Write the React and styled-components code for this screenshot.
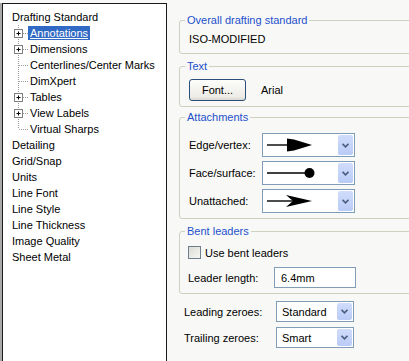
import React from 'react';
import styled, { createGlobalStyle } from 'styled-components';

const Global = createGlobalStyle`
  body {
    margin: 0;
    background: #f8f8f6;
    font-family: "Liberation Sans", Arial, sans-serif;
    font-size: 11px;
    color: #000;
  }
`;

const Page = styled.div`
  display: flex;
  width: 409px;
  height: 361px;
  overflow: hidden;
  padding-top: 3px;
  box-sizing: border-box;
  background: #f8f8f6;
`;

const TreePane = styled.div`
  width: 167px;
  flex: none;
  height: 380px;
  box-sizing: border-box;
  border-left: 2px solid #a9a9a9;
  display: flex;
`;

const Tree = styled.ul`
  list-style: none;
  margin: 0;
  padding: 5px 0 0 5px;
  flex: 1;
  background: #fff;
  border: 1px solid #1a1a1a;
`;

const TreeRow = styled.li`
  display: flex;
  align-items: center;
  height: 16px;
  padding-left: ${p => (p.$child ? 0 : 2)}px;
`;

const Label = styled.span`
  padding: 0 2px;
  line-height: 14px;
  white-space: nowrap;
  background: ${p => (p.$selected ? '#316ac5' : 'transparent')};
  color: ${p => (p.$selected ? '#fff' : '#000')};
  text-decoration: ${p => (p.$selected ? 'underline' : 'none')};
`;

const Connector = ({ expand, last }) => (
  <svg width="20" height="16" style={{ flex: 'none' }}>
    <line x1="10.5" y1="0" x2="10.5" y2={last ? 8 : 16} stroke="#9a9a9a" strokeDasharray="1 1" />
    <line x1="11" y1="8.5" x2="20" y2="8.5" stroke="#9a9a9a" strokeDasharray="1 1" />
    {expand && (
      <g>
        <rect x="6.5" y="4.5" width="8" height="8" fill="#fff" stroke="#808080" />
        <line x1="8.5" y1="8.5" x2="12.5" y2="8.5" stroke="#000" />
        <line x1="10.5" y1="6.5" x2="10.5" y2="10.5" stroke="#000" />
      </g>
    )}
  </svg>
);

const Content = styled.div`
  flex: 1;
  padding: 11px 0 0 12px;
  display: flex;
  flex-direction: column;
`;

const Group = styled.fieldset`
  margin: 0 0 ${p => p.$gap || 0}px;
  padding: 0;
  width: 250px;
  box-sizing: border-box;
  border: 1px solid #d0d0bf;
  border-radius: 3px;
  min-width: 0;
`;

const Legend = styled.legend`
  margin-left: 5px;
  padding: 0 2px;
  line-height: 13px;
  color: #1d50cc;
`;

const GroupBody = styled.div`
  padding: ${p => p.$pad || '6px 0 8px 9px'};
  display: flex;
  flex-direction: column;
  gap: ${p => p.$gap || 0}px;
`;

const FieldRow = styled.div`
  display: flex;
  align-items: center;
  height: ${p => p.$h || 20}px;
`;

const FieldLabel = styled.span`
  width: ${p => p.$w}px;
  flex: none;
`;

const XPButton = styled.button`
  width: 57px;
  height: 22px;
  font: inherit;
  color: #000;
  border: 1px solid #2b4f79;
  border-radius: 3px;
  background: linear-gradient(#fdfdfb, #ecebe6 85%, #d9d7cf);
  margin-right: 15px;
  padding: 0;
`;

const Combo = styled.div`
  width: ${p => p.$w}px;
  height: ${p => p.$h}px;
  box-sizing: border-box;
  border: 1px solid #7f9db9;
  background: #fff;
  display: flex;
  align-items: center;
  padding-left: ${p => p.$pl || 3}px;
`;

const ComboButton = styled.span`
  margin: 1px 1px 1px auto;
  align-self: stretch;
  width: 15px;
  border-radius: 2px;
  background: linear-gradient(#d0dcfb, #b9cbf6);
  display: flex;
  align-items: center;
  justify-content: center;
`;

const Chevron = () => (
  <svg width="7" height="5" viewBox="0 0 7 5">
    <path d="M0.5 0.8 L3.5 3.8 L6.5 0.8" fill="none" stroke="#4d6185" strokeWidth="1.8" />
  </svg>
);

const TextInput = styled.input`
  width: 82px;
  height: 21px;
  box-sizing: border-box;
  border: 1px solid #7f9db9;
  font: inherit;
  padding: 0 0 0 6px;
  background: #fff;
`;

const CheckRow = styled.label`
  display: flex;
  align-items: center;
  gap: 4px;
  height: 13px;
`;

const CheckBox = styled.span`
  width: 13px;
  height: 13px;
  box-sizing: border-box;
  border: 1px solid #6f7f8e;
  background: linear-gradient(135deg, #dcdcd6, #f6f6f3);
`;

const Loose = styled.div`
  display: flex;
  flex-direction: column;
  gap: 5px;
  padding-left: 5px;
  margin-top: 7px;
`;

const Leader = ({ kind }) => (
  <svg width="60" height="16" viewBox="0 0 60 16">
    {kind === 'dot' ? (
      <g>
        <line x1="1" y1="8" x2="40" y2="8" stroke="#000" strokeWidth="1.4" />
        <circle cx="43.5" cy="8" r="5" fill="#000" />
      </g>
    ) : kind === 'open' ? (
      <g>
        <line x1="1" y1="8" x2="28" y2="8" stroke="#000" strokeWidth="1.4" />
        <polygon points="20,2 46,8 20,14 27,8" fill="#000" />
      </g>
    ) : (
      <g>
        <line x1="1" y1="8" x2="22" y2="8" stroke="#000" strokeWidth="1.4" />
        <polygon points="21,1.5 28,2.5 46,8 28,13.5 21,14.5" fill="#000" />
      </g>
    )}
  </svg>
);

const treeItems = [
  { label: 'Drafting Standard' },
  { label: 'Annotations', child: true, expand: true, selected: true },
  { label: 'Dimensions', child: true, expand: true },
  { label: 'Centerlines/Center Marks', child: true },
  { label: 'DimXpert', child: true },
  { label: 'Tables', child: true, expand: true },
  { label: 'View Labels', child: true, expand: true },
  { label: 'Virtual Sharps', child: true, last: true },
  { label: 'Detailing' },
  { label: 'Grid/Snap' },
  { label: 'Units' },
  { label: 'Line Font' },
  { label: 'Line Style' },
  { label: 'Line Thickness' },
  { label: 'Image Quality' },
  { label: 'Sheet Metal' },
];

const attachments = [
  { label: 'Edge/vertex:', kind: 'solid' },
  { label: 'Face/surface:', kind: 'dot' },
  { label: 'Unattached:', kind: 'open' },
];

export default function App() {
  return (
    <Page>
      <Global />
      <TreePane>
        <Tree>
          {treeItems.map(it => (
            <TreeRow key={it.label} $child={it.child}>
              {it.child && <Connector expand={it.expand} last={it.last} />}
              <Label $selected={it.selected}>{it.label}</Label>
            </TreeRow>
          ))}
        </Tree>
      </TreePane>

      <Content>
        <Group $gap={6}>
          <Legend>Overall drafting standard</Legend>
          <GroupBody $pad="5px 0 7px 9px">
            <FieldRow $h={14}>ISO-MODIFIED</FieldRow>
          </GroupBody>
        </Group>

        <Group $gap={4}>
          <Legend>Text</Legend>
          <GroupBody $pad="6px 0 5px 9px">
            <FieldRow $h={22}>
              <XPButton>Font...</XPButton>
              Arial
            </FieldRow>
          </GroupBody>
        </Group>

        <Group $gap={6}>
          <Legend>Attachments</Legend>
          <GroupBody $pad="9px 0 5px 9px" $gap={4}>
            {attachments.map(a => (
              <FieldRow key={a.label} $h={24}>
                <FieldLabel $w={73}>{a.label}</FieldLabel>
                <Combo $w={93} $h={24}>
                  <Leader kind={a.kind} />
                  <ComboButton><Chevron /></ComboButton>
                </Combo>
              </FieldRow>
            ))}
          </GroupBody>
        </Group>

        <Group>
          <Legend>Bent leaders</Legend>
          <GroupBody $pad="8px 0 5px 8px" $gap={8}>
            <CheckRow>
              <CheckBox />
              Use bent leaders
            </CheckRow>
            <FieldRow $h={21}>
              <FieldLabel $w={86}>Leader length:</FieldLabel>
              <TextInput readOnly value="6.4mm" />
            </FieldRow>
          </GroupBody>
        </Group>

        <Loose>
          <FieldRow $h={21}>
            <FieldLabel $w={92}>Leading zeroes:</FieldLabel>
            <Combo $w={78} $h={21} $pl={5}>
              Standard
              <ComboButton><Chevron /></ComboButton>
            </Combo>
          </FieldRow>
          <FieldRow $h={21}>
            <FieldLabel $w={92}>Trailing zeroes:</FieldLabel>
            <Combo $w={78} $h={21} $pl={5}>
              Smart
              <ComboButton><Chevron /></ComboButton>
            </Combo>
          </FieldRow>
        </Loose>
      </Content>
    </Page>
  );
}
